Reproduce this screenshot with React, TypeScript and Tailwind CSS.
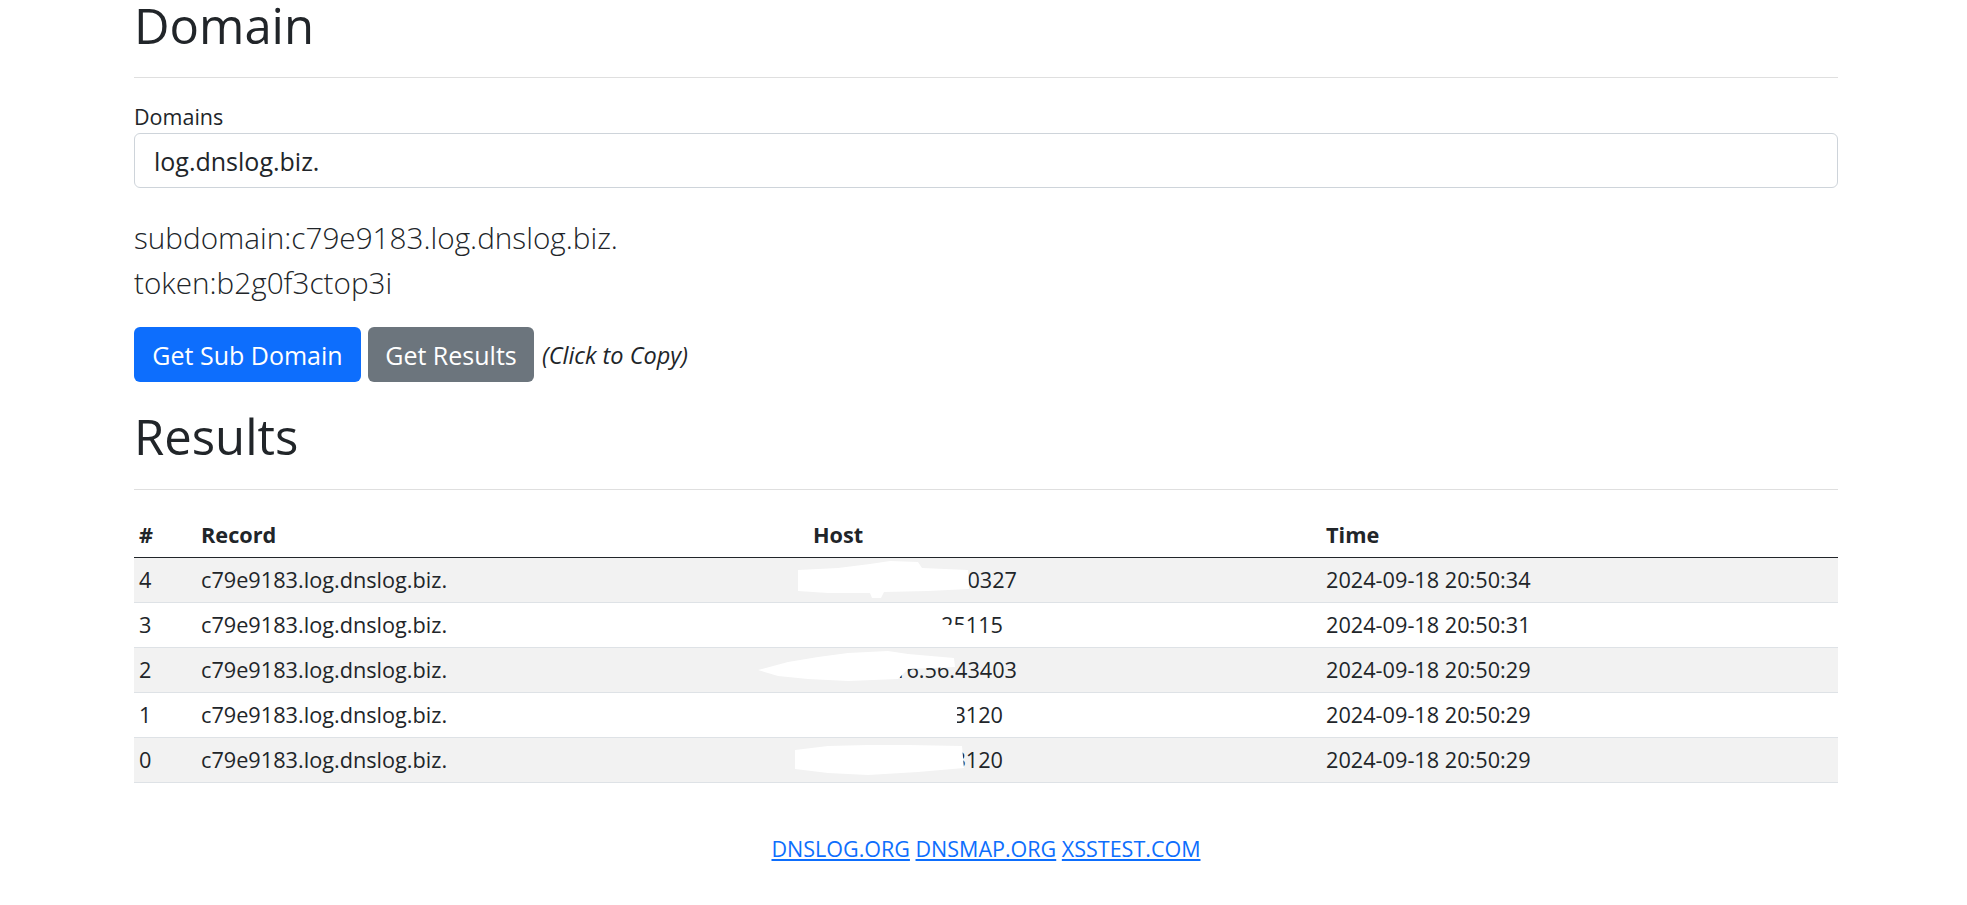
import React from 'react';

type Row = {
  id: number;
  record: string;
  host: string;
  hostEnd: number; // px from text start where the host text ends
  time: string;
  striped: boolean;
  mask: React.ReactNode;
};

const RECORD = 'c79e9183.log.dnslog.biz.';

// white brush marks that hide part of the host column (coords from cell left edge)
const rows: Row[] = [
  {
    id: 4,
    record: RECORD,
    host: '183.129.96.14.40327',
    hostEnd: 204,
    time: '2024-09-18 20:50:34',
    striped: true,
    mask: (
      <polygon points="-10,12 30,10 62,6 82,3 110,4 114,10 160,12 161,31 120,33 76,34 73,40 64,40 62,35 20,35 -10,33" />
    ),
  },
  {
    id: 3,
    record: RECORD,
    host: '83.129.96.14.25115',
    hostEnd: 190,
    time: '2024-09-18 20:50:31',
    striped: false,
    mask: (
      <>
        <rect x="-20" y="0" width="153" height="44" />
        <rect x="132" y="22" width="26" height="22" />
      </>
    ),
  },
  {
    id: 2,
    record: RECORD,
    host: '183.129.16.56.43403',
    hostEnd: 204,
    time: '2024-09-18 20:50:29',
    striped: true,
    mask: (
      <polygon points="-50,22 -20,14 10,9 40,5 80,3 100,6 146,10 147,19 100,21 90,31 40,33 0,31 -30,28" />
    ),
  },
  {
    id: 1,
    record: RECORD,
    host: '83.129.96.14.53120',
    hostEnd: 190,
    time: '2024-09-18 20:50:29',
    striped: false,
    mask: <rect x="-20" y="0" width="169" height="44" />,
  },
  {
    id: 0,
    record: RECORD,
    host: '83.129.96.14.53120',
    hostEnd: 190,
    time: '2024-09-18 20:50:29',
    striped: true,
    mask: (
      <polygon points="-13,12 20,8 60,7 100,7 154,8 156,30 110,34 60,37 20,35 -13,31" />
    ),
  },
];

function HostCell({ row }: { row: Row }) {
  return (
    <div className="relative h-full flex items-center pl-[5px]">
      <div className="flex justify-end" style={{ width: row.hostEnd }}>
        <span className="flex-none whitespace-nowrap">{row.host}</span>
      </div>
      <svg
        className="absolute left-0 top-0 overflow-visible pointer-events-none"
        width="513"
        height="44"
        fill="#ffffff"
        aria-hidden="true"
      >
        {row.mask}
      </svg>
    </div>
  );
}

const COLS = 'grid grid-cols-[62px_612px_513px_517px] h-[45px] border-b';

export default function App() {
  return (
    <div className="min-h-screen bg-white text-[#212529] font-['Open_Sans',sans-serif] text-[21.5px] leading-[32px]">
      <div className="pl-[134px] pr-[129px]">
        {/* Domain section */}
        <h1 className="text-[49px] leading-[50px] font-normal">Domain</h1>
        <div className="mt-[27px] h-px bg-[#dfdfdf]" />

        <label className="block mt-[23px] text-[21.5px] leading-[32px]">Domains</label>
        <div className="h-[55px] border border-[#ced4da] rounded-[6px] flex items-center px-[19px] text-[25px]">
          log.dnslog.biz.
        </div>

        <div className="mt-[27px] text-[29.7px] leading-[45px] font-light">
          <div>subdomain:c79e9183.log.dnslog.biz.</div>
          <div>token:b2g0f3ctop3i</div>
        </div>

        <div className="mt-[22px] flex items-center">
          <button className="w-[227px] h-[55px] rounded-[6px] bg-[#0d6efd] text-white text-[25px]">
            Get Sub Domain
          </button>
          <button className="ml-[7px] w-[166px] h-[55px] rounded-[6px] bg-[#6c757d] text-white text-[25px]">
            Get Results
          </button>
          <em className="ml-[8px] text-[23.5px]">(Click to Copy)</em>
        </div>

        {/* Results section */}
        <h1 className="mt-[29px] text-[49px] leading-[50px] font-normal">Results</h1>
        <div className="mt-[28px] h-px bg-[#dfdfdf]" />

        <div className="mt-[23px] text-[21.7px]">
          <div className={`${COLS} border-[#212529] font-bold`}>
            <div className="flex items-center pl-[5px]">#</div>
            <div className="flex items-center pl-[5px]">Record</div>
            <div className="flex items-center pl-[5px]">Host</div>
            <div className="flex items-center pl-[5px]">Time</div>
          </div>
          {rows.map((row) => (
            <div
              key={row.id}
              className={`${COLS} border-[#dee2e6] ${row.striped ? 'bg-[#f2f2f2]' : 'bg-white'}`}
            >
              <div className="flex items-center pl-[5px]">{row.id}</div>
              <div className="flex items-center pl-[5px]">{row.record}</div>
              <HostCell row={row} />
              <div className="flex items-center pl-[5px]">{row.time}</div>
            </div>
          ))}
        </div>

        {/* Footer links */}
        <div className="mt-[50px] text-center text-[21.5px]">
          <a href="#" className="text-[#0d6efd] underline">DNSLOG.ORG</a>{' '}
          <a href="#" className="text-[#0d6efd] underline">DNSMAP.ORG</a>{' '}
          <a href="#" className="text-[#0d6efd] underline">XSSTEST.COM</a>
        </div>
      </div>
    </div>
  );
}
